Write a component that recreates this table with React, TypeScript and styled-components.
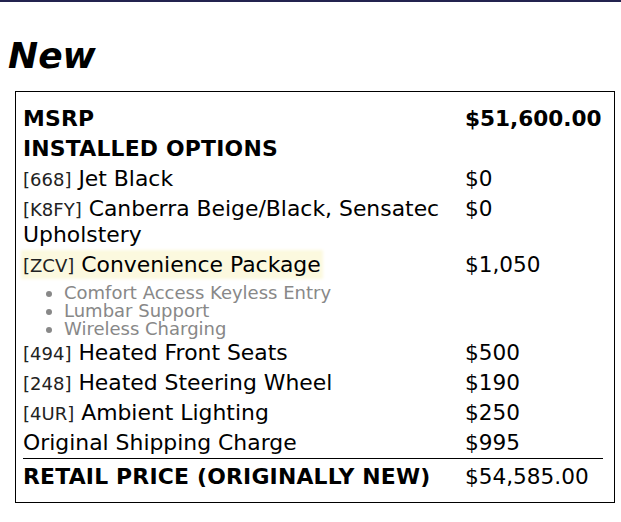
import React from "react";
import styled, { createGlobalStyle } from "styled-components";

const Global = createGlobalStyle`
  html, body { margin: 0; padding: 0; background: #fff; }
  body { font-family: "DejaVu Sans", sans-serif; color: #000; }
`;

const TopBar = styled.div`
  height: 2px;
  background: #23234f;
`;

const Page = styled.div`
  padding: 0 6px 0 8px;
`;

const Heading = styled.h1`
  margin: 33px 0 0 0;
  font-family: "DejaVu Sans", sans-serif;
  font-weight: bold;
  font-style: italic;
  font-size: 36px;
  line-height: 41px;
`;

const Box = styled.div`
  margin: 15px 0 0 7px;
  border: 1px solid #000;
  padding: 12px 11px 9px 7px;
`;

const Row = styled.div<{ $total?: boolean }>`
  display: grid;
  grid-template-columns: 1fr 138px;
  column-gap: 8px;
  padding: ${(p) => (p.$total ? "5px 0 3px" : "2px 0")};
  border-top: ${(p) => (p.$total ? "1px solid #000" : "none")};
  font-size: 21.9px;
  line-height: 26px;
`;

const Label = styled.div<{ $bold?: boolean }>`
  font-weight: ${(p) => (p.$bold ? "bold" : "normal")};
  letter-spacing: ${(p) => (p.$bold ? "0.2px" : "0")};
`;

const Price = styled.div<{ $bold?: boolean }>`
  font-size: 21.6px;
  font-weight: ${(p) => (p.$bold ? "bold" : "normal")};
`;

const Code = styled.span`
  font-size: 18px;
  line-height: 0;
  color: #222;
`;

const Highlight = styled.span`
  background: #fcf9df;
  box-shadow: 0 0 3px 2px #fcf9df;
`;

const SubList = styled.ul`
  margin: 4px 0 0 0;
  padding: 0 0 0 41px;
  font-size: 18px;
  line-height: 18px;
  color: #888;
  list-style: disc;
`;

type Opt = { code?: string; name: string; price: string; highlight?: boolean; sub?: string[] };

const options: Opt[] = [
  { code: "[668]", name: "Jet Black", price: "$0" },
  { code: "[K8FY]", name: "Canberra Beige/Black, Sensatec Upholstery", price: "$0" },
  {
    code: "[ZCV]",
    name: "Convenience Package",
    price: "$1,050",
    highlight: true,
    sub: ["Comfort Access Keyless Entry", "Lumbar Support", "Wireless Charging"],
  },
  { code: "[494]", name: "Heated Front Seats", price: "$500" },
  { code: "[248]", name: "Heated Steering Wheel", price: "$190" },
  { code: "[4UR]", name: "Ambient Lighting", price: "$250" },
  { name: "Original Shipping Charge", price: "$995" },
];

export default function App() {
  return (
    <>
      <Global />
      <TopBar />
      <Page>
        <Heading>New</Heading>
        <Box>
          <Row>
            <Label $bold>MSRP</Label>
            <Price $bold>$51,600.00</Price>
          </Row>
          <Row>
            <Label $bold>INSTALLED OPTIONS</Label>
            <Price />
          </Row>
          {options.map((o) => {
            const content = (
              <>
                {o.code && <Code>{o.code}</Code>}
                {o.code ? " " : ""}
                {o.name}
              </>
            );
            return (
              <React.Fragment key={o.name}>
                <Row>
                  <Label>{o.highlight ? <Highlight>{content}</Highlight> : content}</Label>
                  <Price>{o.price}</Price>
                </Row>
                {o.sub && (
                  <SubList>
                    {o.sub.map((s) => (
                      <li key={s}>{s}</li>
                    ))}
                  </SubList>
                )}
              </React.Fragment>
            );
          })}
          <Row $total>
            <Label $bold>RETAIL PRICE (ORIGINALLY NEW)</Label>
            <Price>$54,585.00</Price>
          </Row>
        </Box>
      </Page>
    </>
  );
}
